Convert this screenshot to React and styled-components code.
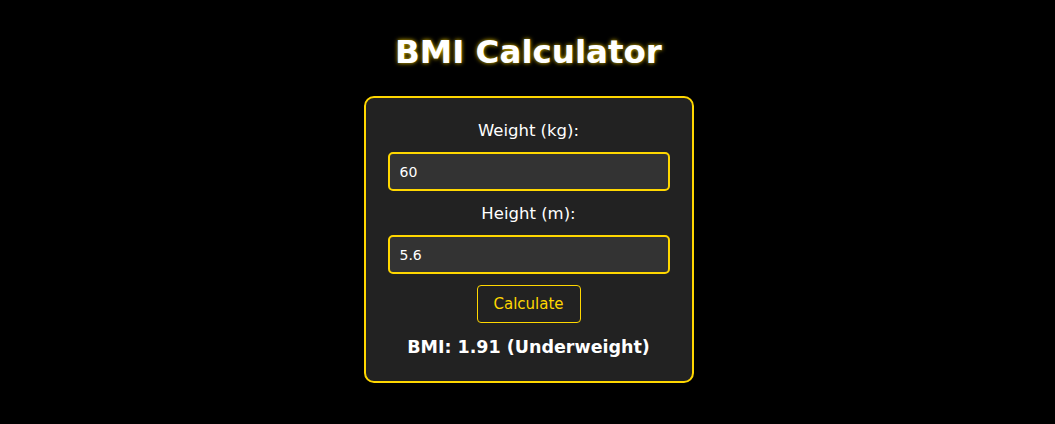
import { useState } from 'react';
import styled, { createGlobalStyle } from 'styled-components';

const GlobalStyle = createGlobalStyle`
  body {
    margin: 0;
    background-color: #000;
    font-family: 'DejaVu Sans', 'Open Sans', sans-serif;
    color: #fff;
  }
`;

const Page = styled.div`
  display: flex;
  flex-direction: column;
  align-items: center;
  padding: 30px 0 0 2px;
`;

const Title = styled.h1`
  margin: 0 0 22px;
  font-size: 32.5px;
  font-weight: bold;
  line-height: 44px;
  color: #fff;
  text-shadow: 0 0 4px rgba(255, 215, 0, 0.9);
`;

const Card = styled.div`
  width: 282px;
  padding: 20px 22px 22px;
  background-color: #222;
  border: 2px solid #ffd700;
  border-radius: 10px;
  display: flex;
  flex-direction: column;
  align-items: center;
`;

const Label = styled.label`
  font-size: 16.5px;
  line-height: 26px;
  margin-bottom: 8px;
  color: #fff;
`;

const Input = styled.input`
  box-sizing: border-box;
  width: 100%;
  height: 39px;
  padding: 0 10px;
  margin-bottom: 10px;
  background-color: #333;
  border: 2px solid #ffd700;
  border-radius: 5px;
  color: #fff;
  font-family: inherit;
  font-size: 14px;

  &:focus {
    outline: none;
  }
`;

const Button = styled.button`
  box-sizing: border-box;
  width: 104px;
  height: 38px;
  margin-top: 1px;
  background: transparent;
  border: 1px solid #ffd700;
  border-radius: 4px;
  color: #ffd700;
  font-family: inherit;
  font-size: 15px;
  cursor: pointer;
`;

const Result = styled.p`
  margin: 12px 0 0;
  font-size: 17.5px;
  font-weight: bold;
  line-height: 24px;
`;

function category(bmi) {
  if (bmi < 18.5) return 'Underweight';
  if (bmi < 25) return 'Normal';
  if (bmi < 30) return 'Overweight';
  return 'Obese';
}

export default function App() {
  const [weight, setWeight] = useState('60');
  const [height, setHeight] = useState('5.6');
  const [bmi, setBmi] = useState(60 / (5.6 * 5.6));

  const calculate = () => {
    const w = parseFloat(weight);
    const h = parseFloat(height);
    if (w > 0 && h > 0) setBmi(w / (h * h));
  };

  return (
    <Page>
      <GlobalStyle />
      <Title>BMI Calculator</Title>
      <Card>
        <Label htmlFor="weight">Weight (kg):</Label>
        <Input id="weight" value={weight} onChange={(e) => setWeight(e.target.value)} />
        <Label htmlFor="height">Height (m):</Label>
        <Input id="height" value={height} onChange={(e) => setHeight(e.target.value)} />
        <Button onClick={calculate}>Calculate</Button>
        {bmi !== null && (
          <Result>
            BMI: {bmi.toFixed(2)} ({category(bmi)})
          </Result>
        )}
      </Card>
    </Page>
  );
}
